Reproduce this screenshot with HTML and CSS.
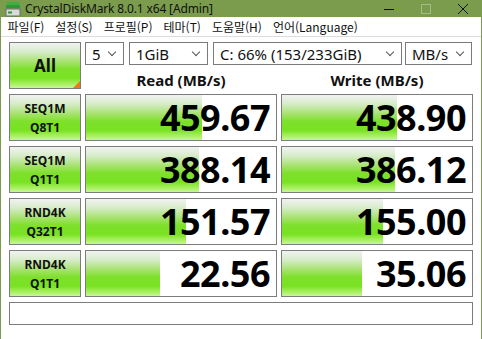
FILE: index.html
```html
<!DOCTYPE html>
<html lang="ko">
<head>
<meta charset="utf-8">
<title>CrystalDiskMark 8.0.1 x64 [Admin]</title>
<link rel="stylesheet" href="styles.css">
</head>
<body>
<div class="window">
  <div class="titlebar">
    <svg class="appicon" width="16" height="16" viewBox="0 0 16 16">
      <rect x="2" y="1" width="12" height="3" fill="#3cb043"/>
      <rect x="1" y="4" width="14" height="3" fill="#2e9a35"/>
      <rect x="1" y="8" width="14" height="7" fill="#d8dcd8" stroke="#6c706c" stroke-width="1"/>
      <rect x="3" y="10.5" width="4" height="2" fill="#2e9a35"/>
    </svg>
    <span class="title">CrystalDiskMark 8.0.1 x64 [Admin]</span>
    <div class="controls">
      <svg width="12" height="12" viewBox="0 0 12 12"><path d="M1 6.5h10" stroke="#111" stroke-width="1"/></svg>
      <svg width="12" height="12" viewBox="0 0 12 12"><rect x="1.5" y="1.5" width="9" height="9" fill="none" stroke="#a6bc86" stroke-width="1"/></svg>
      <svg width="12" height="12" viewBox="0 0 12 12"><path d="M1 1L11 11M11 1L1 11" stroke="#111" stroke-width="1"/></svg>
    </div>
  </div>
  <div class="menubar">
    <span class="menu">파일(F)</span>
    <span class="menu">설정(S)</span>
    <span class="menu">프로필(P)</span>
    <span class="menu">테마(T)</span>
    <span class="menu">도움말(H)</span>
    <span class="menu">언어(Language)</span>
  </div>
  <div class="client">
    <div class="grid">
      <div class="btn all">All<span class="corner"></span></div>
      <div class="top">
        <div class="selects">
          <div class="select s1"><span>5</span><i class="chev"></i></div>
          <div class="select s2"><span>1GiB</span><i class="chev"></i></div>
          <div class="select s3"><span>C: 66% (153/233GiB)</span><i class="chev"></i></div>
          <div class="select s4"><span>MB/s</span><i class="chev"></i></div>
        </div>
        <div class="heads">
          <div class="head">Read (MB/s)</div>
          <div class="head">Write (MB/s)</div>
        </div>
      </div>

      <div class="btn label"><span>SEQ1M</span><span>Q8T1</span></div>
      <div class="meter"><div class="bar" style="width:116px"></div><span class="val">459.67</span></div>
      <div class="meter"><div class="bar" style="width:115px"></div><span class="val">438.90</span></div>

      <div class="btn label"><span>SEQ1M</span><span>Q1T1</span></div>
      <div class="meter"><div class="bar" style="width:113px"></div><span class="val">388.14</span></div>
      <div class="meter"><div class="bar" style="width:113px"></div><span class="val">386.12</span></div>

      <div class="btn label"><span>RND4K</span><span>Q32T1</span></div>
      <div class="meter"><div class="bar" style="width:100px"></div><span class="val">151.57</span></div>
      <div class="meter"><div class="bar" style="width:101px"></div><span class="val">155.00</span></div>

      <div class="btn label"><span>RND4K</span><span>Q1T1</span></div>
      <div class="meter"><div class="bar" style="width:74px"></div><span class="val">22.56</span></div>
      <div class="meter"><div class="bar" style="width:80px"></div><span class="val">35.06</span></div>

      <div class="comment"></div>
    </div>
  </div>
</div>
</body>
</html>
```

FILE: styles.css
```css
html, body {
  margin: 0;
  padding: 0;
}
body {
  width: 482px;
  height: 339px;
  background: #7b9b4d;
  font-family: "Noto Sans", "Noto Sans CJK KR", sans-serif;
  overflow: hidden;
}
.window {
  display: flex;
  flex-direction: column;
  height: 339px;
}
.titlebar {
  height: 21px;
  display: flex;
  align-items: center;
  color: #111;
}
.appicon {
  margin-left: 5px;
  margin-right: 4px;
  flex: none;
}
.title {
  font-size: 12px;
  letter-spacing: -0.15px;
}
.controls {
  margin-left: auto;
  display: flex;
  gap: 25px;
  margin-right: 13px;
}
.controls svg { display: block; }
.menubar {
  height: 19px;
  background: #ffffff;
  margin: 0 1px;
  display: flex;
  align-items: center;
  padding-left: 1px;
  border-bottom: 1px solid #dcdcdc;
}
.menu {
  font-family: "Noto Sans CJK KR", sans-serif;
  font-size: 12px;
  padding: 0 5.5px;
  color: #111;
  line-height: 19px;
}
.client {
  flex: 1;
  background: #ffffff;
  margin: 0 1px 2px 1px;
  padding: 5px 0 0 8px;
}
.grid {
  display: grid;
  grid-template-columns: 72px 192px 192px;
  grid-auto-rows: 47px;
  column-gap: 4px;
  row-gap: 5px;
}
.btn {
  box-sizing: border-box;
  border: 1px solid #7c7c7c;
  background: linear-gradient(to bottom, #f2f2f2 0%, #d6ecc8 20%, #a6e26e 42%, #7ee02c 58%, #78e222 78%, #a6ef5c 90%, #c6f798 100%);
  font-weight: bold;
  color: #111;
  display: flex;
  align-items: center;
  justify-content: center;
}
.all {
  position: relative;
  font-size: 17px;
}
.corner {
  position: absolute;
  right: 0;
  bottom: 0;
  width: 0;
  height: 0;
  border-style: solid;
  border-width: 0 0 7px 7px;
  border-color: transparent transparent #f07818 transparent;
}
.label {
  flex-direction: column;
  font-size: 12px;
  line-height: 19px;
}
.top {
  grid-column: 2 / 4;
  display: flex;
  flex-direction: column;
}
.selects {
  display: flex;
  height: 23px;
}
.select {
  box-sizing: border-box;
  height: 23px;
  border: 1px solid #7a7a7a;
  display: flex;
  align-items: center;
  padding-left: 6px;
  font-size: 15px;
  color: #111;
}
.select span { flex: 1; white-space: nowrap; }
.s1 { width: 39px; margin-right: 5px; }
.s2 { width: 79px; margin-right: 5px; }
.s3 { width: 189px; margin-right: 3px; }
.s4 { width: 67px; }
.chev {
  width: 5px;
  height: 5px;
  border-right: 1px solid #555;
  border-bottom: 1px solid #555;
  transform: rotate(45deg);
  margin: 0 8px 4px 0;
}
.heads {
  display: flex;
  gap: 4px;
  flex: 1;
  padding-top: 6px;
}
.head {
  width: 192px;
  text-align: center;
  font-weight: bold;
  font-size: 15px;
  line-height: 18px;
  color: #111;
}
.meter {
  box-sizing: border-box;
  border: 1px solid #7c7c7c;
  background: #fff;
  position: relative;
  display: flex;
  align-items: center;
  justify-content: flex-end;
}
.bar {
  position: absolute;
  left: 0;
  top: 0;
  bottom: 0;
  background: linear-gradient(to bottom, #f2f2f2 0%, #d6ecc8 20%, #a6e26e 42%, #7ee02c 58%, #78e222 78%, #a6ef5c 90%, #c6f798 100%);
}
.val {
  position: relative;
  font-weight: bold;
  font-size: 36px;
  line-height: 45px;
  padding-right: 6px;
  color: #000;
  letter-spacing: -0.5px;
}
.comment {
  grid-column: 1 / 4;
  height: 23px;
  box-sizing: border-box;
  border: 1px solid #7c7c7c;
  background: #fff;
}
```
